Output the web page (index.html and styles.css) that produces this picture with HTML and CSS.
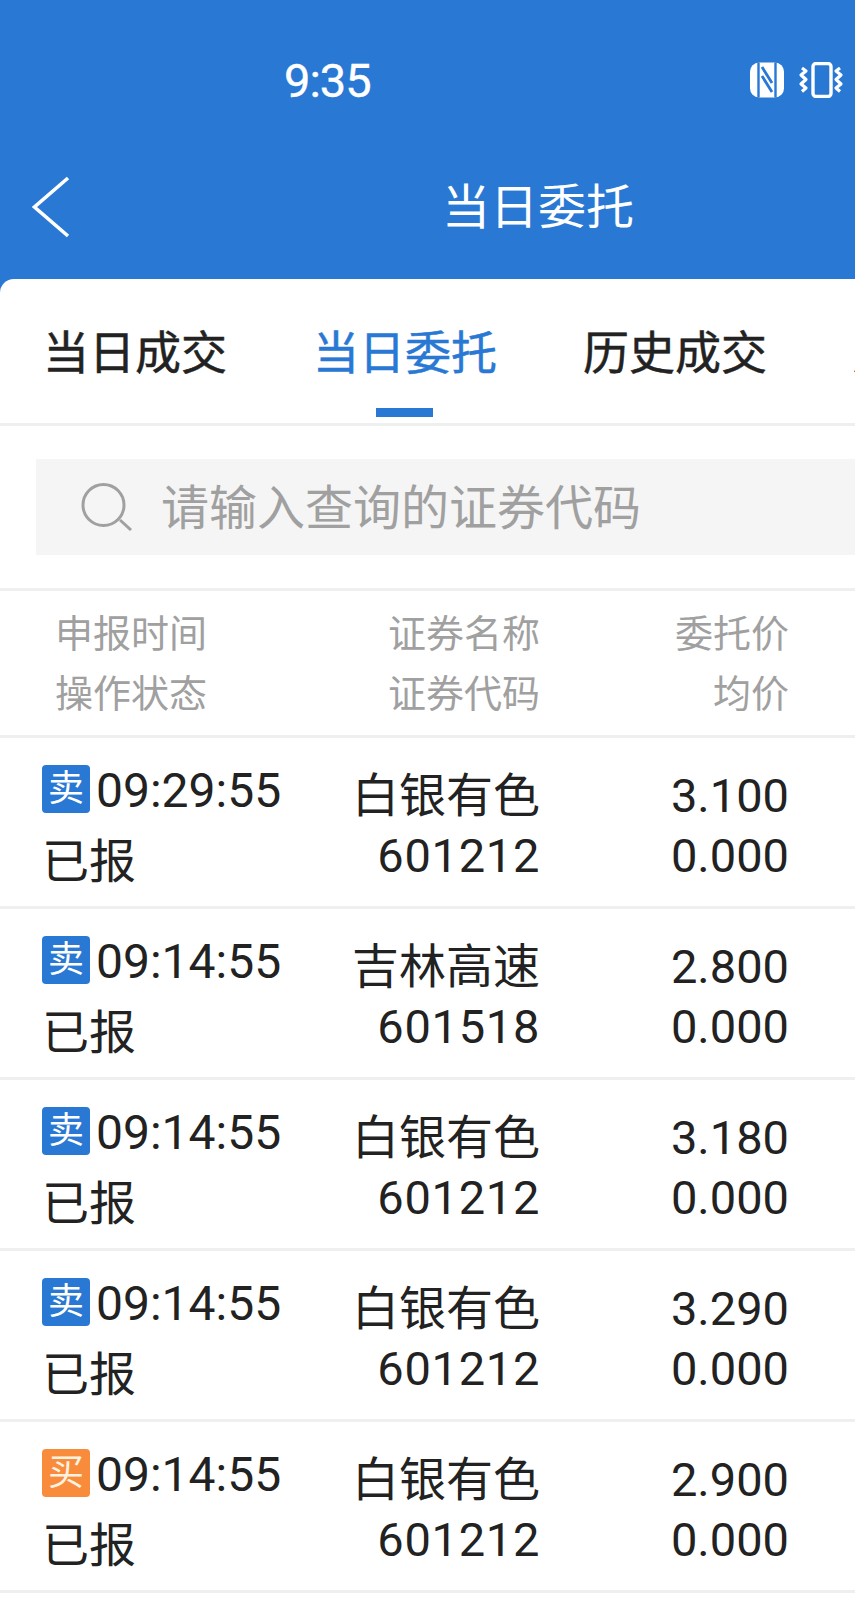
FILE: index.html
```html
<!DOCTYPE html>
<html lang="zh-CN">
<head>
    <meta charset="UTF-8">
    <meta name="viewport" content="width=device-width, initial-scale=1.0">
    <title>当日委托</title>
    <link rel="stylesheet" href="styles.css">
</head>
<body>
    <div class="top">
        <div class="status">
            <span class="clock">9:35</span>
            <div class="status-icons">
                <svg class="nfc" viewBox="0 0 34 36" width="34" height="36">
                    <rect x="0" y="0.500" width="34" height="35" rx="9" fill="#fff"/>
                    <path d="M8.500 0.500v35M25.500 0.500v35" stroke="#2878d4" stroke-width="2.400" fill="none"/>
                    <path d="M12 5l10 16M12 14l10 16" stroke="#2878d4" stroke-width="2.800" fill="none"/>
                </svg>
                <svg class="vibrate" viewBox="0 0 46 36" width="46" height="36" fill="none" stroke="#fff" stroke-linejoin="round">
                    <rect x="15" y="1.500" width="18" height="33" rx="3" stroke-width="3.400"/>
                    <path d="M4 6l4 3-5 4 5 4.500-5 4.500 5 4-4 3.500" stroke-width="3.200"/>
                    <path d="M42 6l-4 3 5 4-5 4.500 5 4.500-5 4 4 3.500" stroke-width="3.200"/>
                </svg>
            </div>
        </div>
        <div class="nav">
            <svg class="back" viewBox="0 0 38 62" width="38" height="62" fill="none" stroke="#fff" stroke-width="3.600">
                <path d="M36 2L2.500 31 36 60"/>
            </svg>
            <h1>当日委托</h1>
        </div>
    </div>

    <div class="sheet">
        <div class="tabs">
            <span class="tab">当日成交</span>
            <span class="tab active">当日委托</span>
            <span class="tab">历史成交</span>
            <span class="tab">历史委托</span>
        </div>

        <div class="search-wrap">
            <div class="search">
                <svg viewBox="0 0 52 48" width="52" height="48" fill="none" stroke="#a0a0a0" stroke-width="3">
                    <circle cx="22.500" cy="22" r="20.500"/>
                    <path d="M39 37l11 10"/>
                </svg>
                <span>请输入查询的证券代码</span>
            </div>
        </div>

        <div class="row head">
            <div class="col-time">
                <span>申报时间</span>
                <span>操作状态</span>
            </div>
            <div class="col-name">
                <span>证券名称</span>
                <span>证券代码</span>
            </div>
            <div class="col-price">
                <span>委托价</span>
                <span>均价</span>
            </div>
        </div>

        <div class="row">
            <div class="col-time">
                <span class="when"><b class="badge">卖</b>09:29:55</span>
                <span>已报</span>
            </div>
            <div class="col-name">
                <span>白银有色</span>
                <span class="code">601212</span>
            </div>
            <div class="col-price">
                <span>3.100</span>
                <span>0.000</span>
            </div>
        </div>

        <div class="row">
            <div class="col-time">
                <span class="when"><b class="badge">卖</b>09:14:55</span>
                <span>已报</span>
            </div>
            <div class="col-name">
                <span>吉林高速</span>
                <span class="code">601518</span>
            </div>
            <div class="col-price">
                <span>2.800</span>
                <span>0.000</span>
            </div>
        </div>

        <div class="row">
            <div class="col-time">
                <span class="when"><b class="badge">卖</b>09:14:55</span>
                <span>已报</span>
            </div>
            <div class="col-name">
                <span>白银有色</span>
                <span class="code">601212</span>
            </div>
            <div class="col-price">
                <span>3.180</span>
                <span>0.000</span>
            </div>
        </div>

        <div class="row">
            <div class="col-time">
                <span class="when"><b class="badge">卖</b>09:14:55</span>
                <span>已报</span>
            </div>
            <div class="col-name">
                <span>白银有色</span>
                <span class="code">601212</span>
            </div>
            <div class="col-price">
                <span>3.290</span>
                <span>0.000</span>
            </div>
        </div>

        <div class="row">
            <div class="col-time">
                <span class="when"><b class="badge buy">买</b>09:14:55</span>
                <span>已报</span>
            </div>
            <div class="col-name">
                <span>白银有色</span>
                <span class="code">601212</span>
            </div>
            <div class="col-price">
                <span>2.900</span>
                <span>0.000</span>
            </div>
        </div>
    </div>
</body>
</html>
```

FILE: styles.css
```css
* {
    margin: 0;
    padding: 0;
    box-sizing: border-box;
}

html,
body {
    height: 100%;
    overflow: hidden;
}

body {
    font-family: Roboto, "Noto Sans CJK SC", sans-serif;
    background-color: #2878d4;
    color: #222;
    display: flex;
    flex-direction: column;
}

/* Blue top area */
.top {
    color: #fff;
    padding-bottom: 25px;
}

.status {
    height: 160px;
    display: flex;
    align-items: center;
    padding: 0 11px 0 284px;
}

.clock {
    font-size: 47px;
    font-weight: 400;
    letter-spacing: -1px;
    -webkit-text-stroke: 0.4px #fff;
}

.status-icons {
    margin-left: auto;
    display: flex;
    align-items: center;
    gap: 14px;
}

.nav {
    height: 94px;
    display: flex;
    align-items: center;
    padding-left: 32px;
}

.nav h1 {
    font-size: 48px;
    font-weight: 400;
    margin: 0 0 8px 372px;
}

/* White sheet */
.sheet {
    flex: 1;
    background-color: #fff;
    border-top-left-radius: 14px;
    overflow: hidden;
}

.tabs {
    height: 147px;
    border-bottom: 3px solid #efefef;
    padding: 0 0 4px 43px;
    display: flex;
    align-items: center;
    gap: 84px;
    white-space: nowrap;
    font-size: 46px;
    -webkit-text-stroke: 0.5px currentColor;
}

.tab {
    position: relative;
    flex-shrink: 0;
    width: 186px;
}

.tab.active {
    color: #2878d4;
}

.tab.active::after {
    content: "";
    position: absolute;
    left: 63px;
    bottom: -35px;
    width: 57px;
    height: 9px;
    background-color: #2878d4;
}

.search-wrap {
    height: 165px;
    padding: 33px 0 33px 36px;
    border-bottom: 3px solid #efefef;
}

.search {
    height: 96px;
    background-color: #f5f5f5;
    color: #a0a0a0;
    font-size: 48px;
    display: flex;
    align-items: center;
    gap: 28px;
    padding-left: 45px;
}

.search span {
    padding-bottom: 6px;
}

/* Table rows */
.row {
    height: 171px;
    border-bottom: 3px solid #efefef;
    padding: 0 66px 0 42px;
    display: grid;
    grid-template-columns: 270px 228px 1fr;
    font-size: 47px;
}

.row > div {
    display: flex;
    flex-direction: column;
    justify-content: center;
}

.col-time {
    line-height: 71px;
    padding-top: 8px;
}

.col-name,
.col-price {
    line-height: 60px;
    text-align: right;
    padding-top: 8px;
}

.code {
    letter-spacing: 0.7px;
}

.when {
    display: flex;
    align-items: center;
    gap: 6px;
    font-size: 48px;
}

.badge {
    width: 48px;
    height: 48px;
    flex-shrink: 0;
    margin-bottom: 4px;
    border-radius: 4px;
    background-color: #2878d4;
    color: #fff;
    font-size: 36px;
    font-weight: 400;
    line-height: 48px;
    text-align: center;
}

.badge.buy {
    background-color: #f98b3c;
    color: #fff3e0;
}

.row.head {
    height: 147px;
    color: #a0a0a0;
    font-size: 38px;
}

.row.head .col-time {
    line-height: 60px;
    padding: 2px 0 0 13px;
}

.row.head .col-name,
.row.head .col-price {
    padding-top: 2px;
}
```
